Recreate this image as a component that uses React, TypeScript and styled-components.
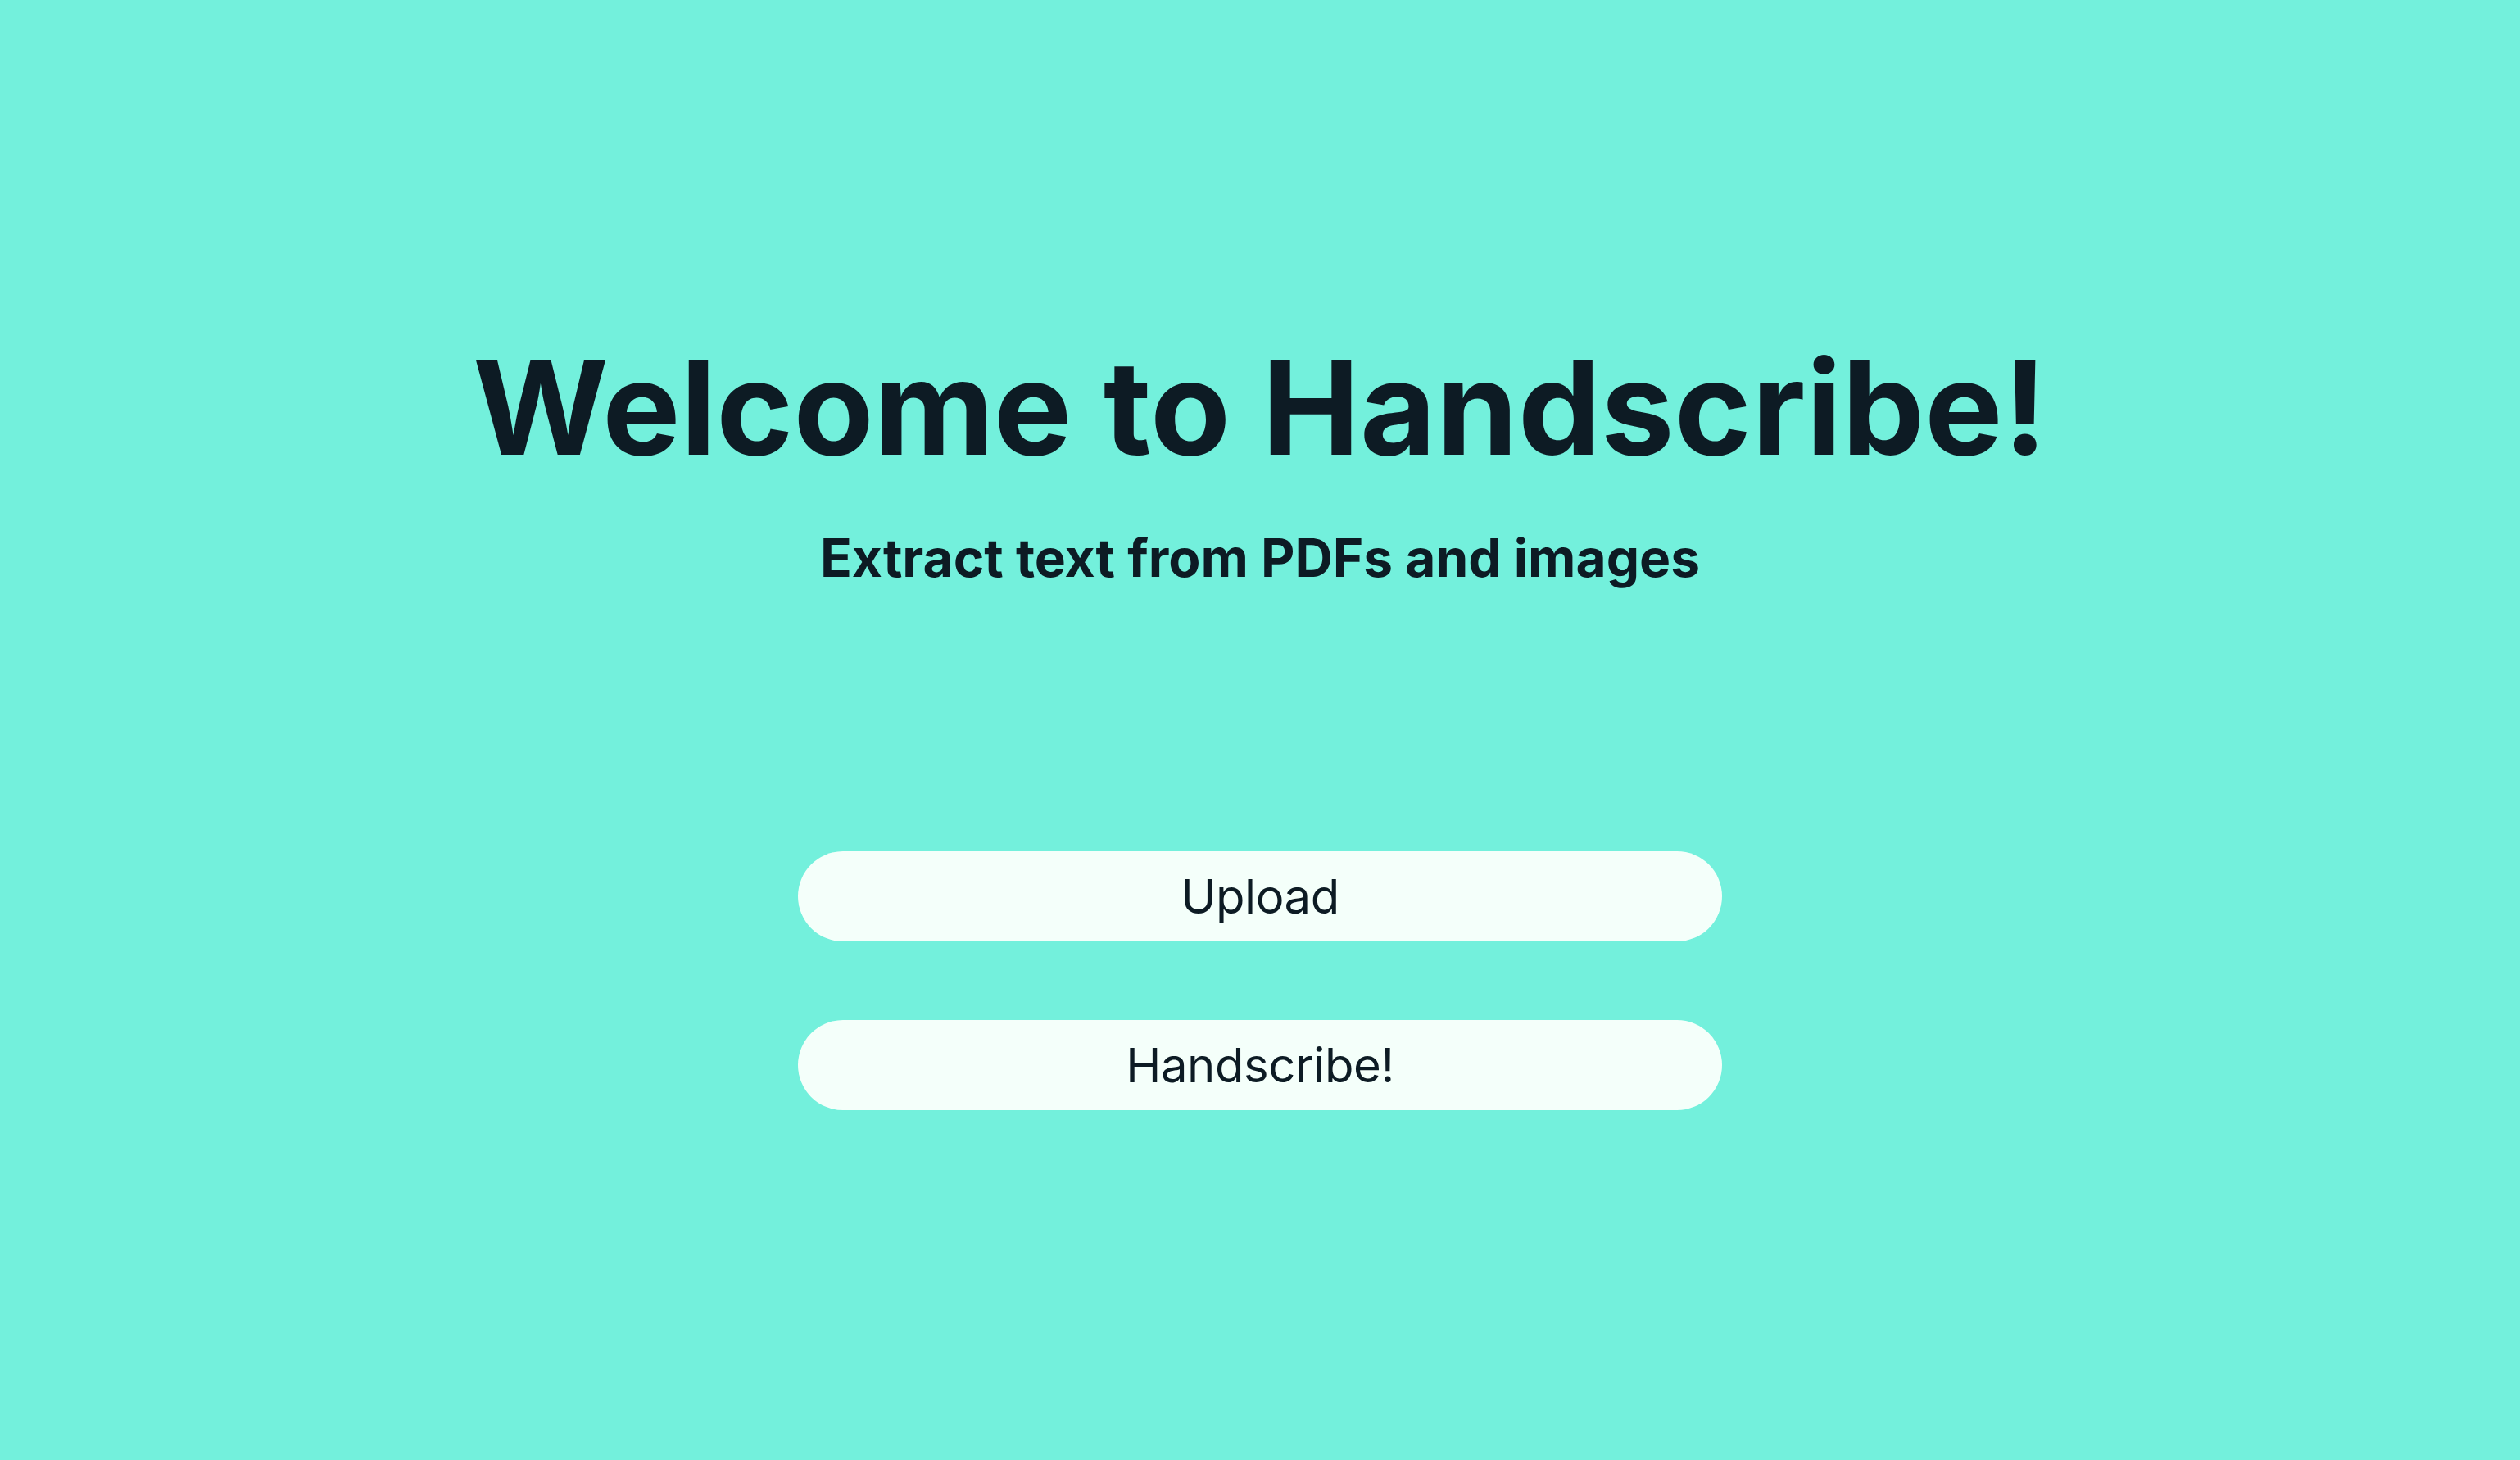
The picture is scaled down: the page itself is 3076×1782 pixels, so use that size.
import React from "react"
import styled, { createGlobalStyle } from "styled-components"

const GlobalStyle = createGlobalStyle`
  html, body {
    margin: 0;
    padding: 0;
    background: #73f0dc;
  }
  body {
    font-family: Inter, "Noto Sans", "Liberation Sans", sans-serif;
    color: #0d1b24;
  }
`

const App: React.FC = () => {
  const onUpload = () => {}
  const onScribe = () => {}

  return (
    <Page>
      <GlobalStyle />
      <Header>
        <Title>Welcome to Handscribe!</Title>
        <Subtitle>Extract text from PDFs and images</Subtitle>
      </Header>
      <ButtonWrap>
        <Button onClick={onUpload}>Upload</Button>
        <Button onClick={onScribe}>Handscribe!</Button>
      </ButtonWrap>
    </Page>
  )
}

const Page = styled.div`
  min-height: 100vh;
  background: #73f0dc;
  display: flex;
  flex-direction: column;
  align-items: center;
  padding-top: 401px;
  box-sizing: border-box;
`

const Header = styled.header`
  display: flex;
  flex-direction: column;
  align-items: center;
  gap: 49px;
`

const Title = styled.h1`
  margin: 0;
  font-size: 160px;
  line-height: 192px;
  font-weight: 700;
  letter-spacing: 0.2px;
  color: #0d1b24;
`

const Subtitle = styled.h2`
  margin: 0;
  font-size: 64px;
  line-height: 77px;
  font-weight: 700;
  color: #0d1b24;
`

const ButtonWrap = styled.div`
  margin-top: 320px;
  display: flex;
  flex-direction: column;
  gap: 96px;
`

const Button = styled.button`
  width: 1128px;
  height: 110px;
  border-radius: 55px;
  border: none;
  background-color: #f4fffa;
  color: #0d1b24;
  font-family: Inter, "Noto Sans", "Liberation Sans", sans-serif;
  font-size: 58px;
  font-weight: 400;
  letter-spacing: -0.4px;
  cursor: pointer;
  -webkit-appearance: none;
  &:active,
  &:focus {
    outline: none;
  }
`

export default App
